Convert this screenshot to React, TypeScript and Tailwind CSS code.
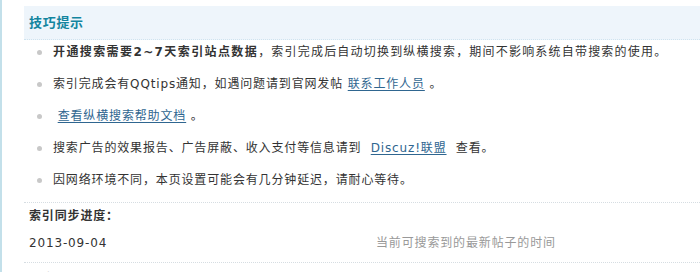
import * as React from "react";

const FONT = "font-['DejaVu_Sans','Noto_Sans_CJK_SC',sans-serif]";

function Bullet() {
  return <span className="ml-[13px] mr-[11px] h-[5px] w-[5px] shrink-0 rounded-full bg-[#c8c8c8]" />;
}

function Link({ children }: { children: React.ReactNode }) {
  return <a className="text-[#2f6690] underline underline-offset-2">{children}</a>;
}

export default function App() {
  return (
    <div className={`${FONT} h-[272px] w-[700px] overflow-hidden bg-white text-[12px] tracking-[0.85px] text-[#333]`}>
      <div className="h-full border-l-2 border-[#c3e0ea] pl-[22px] pt-[6px]">
        {/* Tips header */}
        <div className="flex h-[34px] items-center border-b border-dotted border-[#cfe3ef] bg-[#eef5fb] pl-[5px]">
          <span className="text-[13px] font-bold tracking-[0.7px] text-[#13859f]">技巧提示</span>
        </div>

        {/* Tips list */}
        <ul className="pb-[2px]">
          <li className="mb-[8px] flex items-center leading-[24px]">
            <Bullet />
            <span className="tracking-[1.2px]">
              <b className="tracking-[1.4px]">开通搜索需要2~7天索引站点数据</b>，索引完成后自动切换到纵横搜索，期间不影响系统自带搜索的使用。
            </span>
          </li>
          <li className="mb-[8px] flex items-center leading-[24px]">
            <Bullet />
            <span>
              索引完成会有QQtips通知，如遇问题请到官网发帖 <Link>联系工作人员</Link> 。
            </span>
          </li>
          <li className="mb-[8px] flex items-center leading-[24px]">
            <Bullet />
            <span>
              &nbsp;<Link>查看纵横搜索帮助文档</Link> 。
            </span>
          </li>
          <li className="mb-[8px] flex items-center leading-[24px]">
            <Bullet />
            <span>
              搜索广告的效果报告、广告屏蔽、收入支付等信息请到&nbsp; <Link>Discuz!联盟</Link>&nbsp; 查看。
            </span>
          </li>
          <li className="mb-[8px] flex items-center leading-[24px]">
            <Bullet />
            <span>因网络环境不同，本页设置可能会有几分钟延迟，请耐心等待。</span>
          </li>
        </ul>

        {/* Index sync progress */}
        <div className="border-t border-dotted border-[#d6dde2] pl-[5px]">
          <div className="flex h-[26px] items-center font-bold">索引同步进度：</div>
        </div>
        <div className="flex pb-[8px] pl-[5px] pt-[3px] leading-[22px]">
          <span className="w-[347px]">2013-09-04</span>
          <span className="text-[#999]">当前可搜索到的最新帖子的时间</span>
        </div>
        <div className="border-t border-dotted border-[#d6dde2] pl-[5px] pt-[6px] font-bold leading-[20px]">
          排序设置：
        </div>
      </div>
    </div>
  );
}
